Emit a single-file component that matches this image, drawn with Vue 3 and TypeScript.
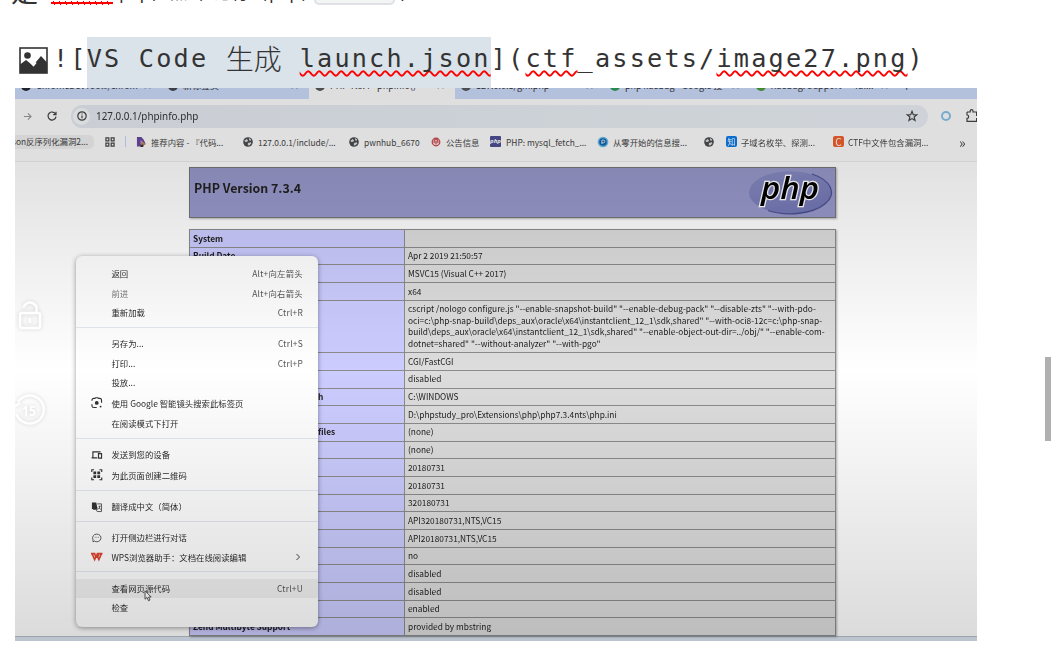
<template>
  <main class="editor">
    <div class="previous-line">
      <span class="lead">是</span>
      <span class="typo"></span>
      <span class="rest">php, 点击 运行 (php)</span>
      <span class="code-chip"></span>
      <span class="stop">,</span>
    </div>

    <div class="source-line">
      <svg class="picture-icon" viewBox="0 0 29 27">
        <rect x="1" y="1" width="27" height="25" fill="#fff" stroke="#333" stroke-width="1.6" />
        <circle cx="8.5" cy="8.5" r="3.3" fill="#333" />
        <path d="M1 17.5L7 13L14 18.5L22 9L28 15.5V26H1Z" fill="#333" />
        <path d="M9 12.5L14.5 18.5L17 15.5" fill="none" stroke="#fff" stroke-width="1.6" />
      </svg>
      <span class="mono">![</span>
      <span class="selected"><span class="mono">VS Code </span><span class="han">生成</span><span class="mono wavy gap">launch.json</span></span>
      <span class="mono">](</span><span class="mono wavy">ctf</span><span class="mono">_assets/</span><span class="mono wavy">image27.png</span><span class="mono">)</span>
    </div>

    <section class="shot">
      <div class="tabs">
        <div v-for="t in tabs" :key="t.title" class="tab" :class="{ active: t.active }" :style="{ width: t.width + 'px' }">
          <i class="favicon" :style="{ background: t.color }"></i>
          <span class="tab-title">{{ t.title }}</span>
          <span class="tab-close">×</span>
        </div>
        <span class="tab-plus">+</span>
      </div>

      <div class="toolbar soft">
        <svg class="forward" viewBox="0 0 10 10"><path d="M1 5H9M5.5 1.5L9 5L5.5 8.5" /></svg>
        <svg class="reload" viewBox="0 0 10 10"><path d="M8.6 3.2A4 4 0 1 0 9 5.6M9 .8V3.6H6.2" /></svg>
        <div class="address">
          <span class="info">
            <svg viewBox="0 0 10 10"><circle cx="5" cy="5" r="4.2" /><path d="M5 4.5V7.3M5 2.6V3.6" /></svg>
          </span>
          <span class="url">127.0.0.1/phpinfo.php</span>
          <svg class="star" viewBox="0 0 12 12"><path d="M6 1.3L7.3 4.6L10.8 4.8L8.1 7L9 10.5L6 8.6L3 10.5L3.9 7L1.2 4.8L4.7 4.6Z" /></svg>
        </div>
        <span class="ring"></span>
        <svg class="puzzle" viewBox="0 0 12 14"><path d="M1 3H4.2V2A1.4 1.4 0 0 1 7 2V3H10.6V6.5H12M1 3V6A1.7 1.7 0 0 1 1 9.4V12.4H10.6V9.5H12" /></svg>
      </div>

      <div class="bookmarks soft">
        <span class="pill">json反序列化漏洞2...</span>
        <svg class="apps" viewBox="0 0 11 11"><path d="M1 1H4.2V4.2H1ZM6.8 1H10V4.2H6.8ZM1 6.8H4.2V10H1ZM6.8 6.8H10V10H6.8Z" /></svg>
        <i class="divider"></i>
        <div v-for="(b, i) in bookmarks" :key="i" class="bookmark" :style="{ width: b.width + 'px' }">
          <svg v-if="b.icon === 'globe'" class="mark" viewBox="0 0 11 11">
            <circle cx="5.5" cy="5.5" r="5.3" fill="#4b4d50" />
            <path d="M1.5 4L4 2.2L5.5 3.5L4.8 5.3L2.5 5.6ZM6.5 1.2L9 2.8L8.2 4.4L6.8 3.5ZM5.5 6.5L8.5 5.8L9.2 7.2L6.5 9.7L5.2 8.5Z" fill="#dcdcdc" />
          </svg>
          <svg v-else-if="b.icon === 'parrot'" class="mark" viewBox="0 0 11 11">
            <path d="M1 0H6L8.5 3L10.5 7.5L7 10.5H1Z" fill="#6b4a9e" />
            <path d="M5 3L8 6L5 8Z" fill="#b39bd2" /><path d="M7 5L10.8 8L6 10.5L5.5 8Z" fill="#c98b4d" /><path d="M5 9L8 8L8 11H5Z" fill="#333" />
          </svg>
          <svg v-else-if="b.icon === 'red'" class="mark" viewBox="0 0 11 11">
            <circle cx="5.5" cy="5.5" r="4.2" fill="#f2d9d8" stroke="#c8434a" stroke-width="1.3" />
            <path d="M3.5 6.5V4.5A2 2 0 0 1 7.5 4.5V6.5M5.5 4V8" fill="none" stroke="#c8434a" stroke-width="1.2" />
          </svg>
          <svg v-else-if="b.icon === 'blue'" class="mark" viewBox="0 0 11 11">
            <circle cx="5.5" cy="5.5" r="5.9" fill="#67c0ea" /><circle cx="5.5" cy="5.5" r="4.2" fill="#1763ad" />
            <path d="M4.3 7.8V3.4H6A1.4 1.4 0 0 1 6 6.4H4.3" fill="none" stroke="#e5f1fa" stroke-width="1" />
          </svg>
          <i v-else class="badge" :class="b.icon">{{ b.glyph }}</i>
          <span>{{ b.title }}</span>
        </div>
        <span class="more">»</span>
      </div>

      <div class="page">
        <div class="phpinfo soft">
          <header class="banner">
            <h1>PHP Version 7.3.4</h1>
            <svg class="php-logo" viewBox="0 0 84 46">
              <defs>
                <linearGradient id="oval" x1=".2" y1="0" x2=".6" y2="1">
                  <stop offset="0" stop-color="#878bc2" />
                  <stop offset="1" stop-color="#7478b6" />
                </linearGradient>
              </defs>
              <ellipse cx="42" cy="24.5" rx="41" ry="21.3" fill="url(#oval)" />
              <path d="M64 6A41 21.3 0 0 1 20 42.5" fill="none" stroke="#4b5090" stroke-width="1.3" />
              <text x="42" y="31" text-anchor="middle" textLength="58" lengthAdjust="spacingAndGlyphs">php</text>
            </svg>
          </header>
          <table>
            <tbody>
              <tr v-for="(r, i) in rows" :key="i" :class="{ tall: r.lines.length > 1 }">
                <th><span :style="{ paddingLeft: (r.shift ?? 0) + 'px' }">{{ r.name }}</span></th>
                <td><div v-for="l in r.lines" :key="l">{{ l }}</div></td>
              </tr>
            </tbody>
          </table>
        </div>
      </div>
      <div class="taskbar"></div>

      <nav class="menu soft">
        <template v-for="(m, i) in menu" :key="i">
          <div v-if="m.sep" class="sep" :style="{ height: m.h + 'px' }"></div>
          <div v-else class="item" :class="{ hover: m.hover, muted: m.muted }" :style="{ height: m.h + 'px' }">
            <span class="item-icon">
              <svg v-if="m.icon === 'lens'" viewBox="0 0 12 12"><path d="M1 4V3A2 2 0 0 1 3 1.5H4L5 .8H7L8 1.5H9A2 2 0 0 1 11 3.5V6M1 7.5V9A2 2 0 0 0 3 11H6" /><circle cx="6" cy="6.2" r="2" class="solid" /><circle cx="10" cy="10" r="1" class="solid" /></svg>
              <svg v-else-if="m.icon === 'device'" viewBox="0 0 12 12"><path d="M2 8.5V3H10M.6 9.3H6.5M7.8 4.8H11V9.5H7.8Z" /></svg>
              <svg v-else-if="m.icon === 'qr'" viewBox="0 0 12 12"><path d="M.8 3.2V.8H3.2M8.8 .8H11.2V3.2M.8 8.8V11.2H3.2M8.8 11.2H11.2V8.8" /><path class="solid" d="M2.5 2.5H5.4V5.4H2.5ZM6.6 2.5H9.5V5.4H6.6ZM2.5 6.6H5.4V9.5H2.5ZM6.6 6.6H9.5V9.5H6.6Z" /></svg>
              <svg v-else-if="m.icon === 'translate'" viewBox="0 0 12 12"><path class="solid" d="M1 1.5H5.5L7 9H2.5L1 7.5Z" /><path class="fine" d="M6.5 3H11V11H6.5L5.5 9.5M8 5.5H10M9 5V6.5L7.8 8.5M8.5 7L10 9" /></svg>
              <svg v-else-if="m.icon === 'chat'" viewBox="0 0 12 12"><path class="fine" d="M2.2 10.4L3.4 9.4A4.4 4 0 1 0 2 7.8ZM4 5.5H4.7M5.8 5.5H6.5M7.6 5.5H8.3" /></svg>
              <svg v-else-if="m.icon === 'wps'" viewBox="0 0 12 12"><path class="wps" d="M0 2.8H4.6M6 2.8H12M1.2 3L3.8 9L6 4.4L8.2 9L10.8 3M3.8 3L4.9 5.8M8.3 3L7.2 5.8" /></svg>
            </span>
            <span class="label">{{ m.label }}</span>
            <span class="key">{{ m.key }}</span>
            <svg v-if="m.icon === 'wps'" class="chevron" viewBox="0 0 6 8"><path d="M1.5 1L4.5 4L1.5 7" /></svg>
          </div>
        </template>
      </nav>

      <svg class="pointer" viewBox="0 0 8 12"><path d="M1 .8V9.2L3 7.4L4.5 10.8L6 10L4.6 7H7.2Z" /></svg>
      <svg class="ghost lock" viewBox="0 0 28 34"><rect x="4" y="15" width="20" height="15" rx="2" /><path d="M7.5 9.5A6.6 6.6 0 1 1 20.5 13V15M14 20V25" /></svg>
      <svg class="ghost rewind" viewBox="0 0 34 36"><path d="M3 10A14 14 0 1 1 1.5 22" /><path d="M-1 15L5 11" /><text x="14" y="23.5" text-anchor="middle" textLength="14" lengthAdjust="spacingAndGlyphs">15</text></svg>
    </section>

    <div class="scroll-thumb"></div>
  </main>
</template>

<script setup lang="ts">
interface Tab { title: string; width: number; color: string; active?: boolean }
interface Bookmark { title: string; width: number; icon: string; glyph?: string }
interface Row { name: string; lines: string[]; shift?: number }
interface MenuEntry { h: number; sep?: boolean; label?: string; key?: string; icon?: string; hover?: boolean; muted?: boolean }

const tabs: Tab[] = [
  { title: "ChromeDevTools/chrom...", width: 147, color: "#24292f" },
  { title: "新标签页", width: 147, color: "#44474c" },
  { title: "PHP 7.3.4 - phpinfo()", width: 146, color: "#55585c", active: true },
  { title: "127.0.0.1/gm.php", width: 149, color: "#55585c" },
  { title: "php xdebug - Google 搜", width: 146, color: "#2e9c5b" },
  { title: "Xdebug: Support — Tai...", width: 149, color: "#4c9c3a" },
];

const bookmarks: Bookmark[] = [
  { title: "推荐内容 - 『代码...", width: 107, icon: "parrot" },
  { title: "127.0.0.1/include/...", width: 106, icon: "globe" },
  { title: "pwnhub_6670", width: 82, icon: "globe" },
  { title: "公告信息", width: 59, icon: "red" },
  { title: "PHP: mysql_fetch_...", width: 108, icon: "php", glyph: "php" },
  { title: "从零开始的信息搜...", width: 106, icon: "blue" },
  { title: "", width: 22, icon: "globe" },
  { title: "子域名枚举、探测...", width: 107, icon: "zhi", glyph: "知" },
  { title: "CTF中文件包含漏洞...", width: 110, icon: "csdn", glyph: "C" },
];

const rows: Row[] = [
  { name: "System", lines: [""] },
  { name: "Build Date", lines: ["Apr 2 2019 21:50:57"] },
  { name: "", lines: ["MSVC15 (Visual C++ 2017)"] },
  { name: "", lines: ["x64"] },
  {
    name: "",
    lines: [
      'cscript /nologo configure.js "--enable-snapshot-build" "--enable-debug-pack" "--disable-zts" "--with-pdo-',
      "oci=c:\\php-snap-build\\deps_aux\\oracle\\x64\\instantclient_12_1\\sdk,shared\" \"--with-oci8-12c=c:\\php-snap-",
      'build\\deps_aux\\oracle\\x64\\instantclient_12_1\\sdk,shared" "--enable-object-out-dir=../obj/" "--enable-com-',
      'dotnet=shared" "--without-analyzer" "--with-pgo"',
    ],
  },
  { name: "", lines: ["CGI/FastCGI"] },
  { name: "", lines: ["disabled"] },
  { name: "h", lines: ["C:\\WINDOWS"], shift: 125 },
  { name: "", lines: ["D:\\phpstudy_pro\\Extensions\\php\\php7.3.4nts\\php.ini"] },
  { name: "files", lines: ["(none)"], shift: 125 },
  { name: "", lines: ["(none)"] },
  { name: "", lines: ["20180731"] },
  { name: "", lines: ["20180731"] },
  { name: "", lines: ["320180731"] },
  { name: "", lines: ["API320180731,NTS,VC15"] },
  { name: "", lines: ["API20180731,NTS,VC15"] },
  { name: "", lines: ["no"] },
  { name: "", lines: ["disabled"] },
  { name: "", lines: ["disabled"] },
  { name: "", lines: ["enabled"] },
  { name: "Zend Multibyte Support", lines: ["provided by mbstring"] },
];

const menu: MenuEntry[] = [
  { label: "返回", key: "Alt+向左箭头", h: 19.5 },
  { label: "前进", key: "Alt+向右箭头", h: 19.5, muted: true },
  { label: "重新加载", key: "Ctrl+R", h: 19.5 },
  { sep: true, h: 11.5 },
  { label: "另存为...", key: "Ctrl+S", h: 19.5 },
  { label: "打印...", key: "Ctrl+P", h: 19.5 },
  { label: "投放...", h: 19.5 },
  { label: "使用 Google 智能镜头搜索此标签页", icon: "lens", h: 21.5 },
  { label: "在阅读模式下打开", h: 19.5 },
  { sep: true, h: 11 },
  { label: "发送到您的设备", icon: "device", h: 20.5 },
  { label: "为此页面创建二维码", icon: "qr", h: 20.5 },
  { sep: true, h: 11 },
  { label: "翻译成中文（简体）", icon: "translate", h: 20 },
  { sep: true, h: 11.5 },
  { label: "打开侧边栏进行对话", icon: "chat", h: 19.5 },
  { label: "WPS浏览器助手：文档在线阅读编辑", icon: "wps", h: 19.5 },
  { sep: true, h: 12 },
  { label: "查看网页源代码", key: "Ctrl+U", h: 19, hover: true },
  { label: "检查", h: 19.5 },
];
</script>

<style>
body {
  background: #fff;
  overflow: hidden;
}
</style>

<style scoped>
.editor {
  position: relative;
  width: 1051px;
  height: 664px;
  overflow: hidden;
  box-sizing: border-box;
  color: #333;
  font-family: "Noto Sans CJK SC", "Noto Sans", sans-serif;
}
svg {
  fill: none;
  flex: none;
  overflow: visible;
}
/* the embedded capture is slightly out of focus */
.soft { filter: blur(.3px); }

/* bottom edge of the line above */
.previous-line {
  display: flex;
  align-items: flex-end;
  height: 6px;
  padding-left: 11px;
  overflow: hidden;
  font: 27px/32px "DejaVu Sans Mono", "Noto Sans CJK SC", monospace;
}
.previous-line span {
  flex: none;
  height: 32px;
  margin-bottom: -3px;
}
.lead { width: 40px; }
.previous-line .typo {
  width: 62px;
  height: 4px;
  margin-bottom: 1px;
  background:
    radial-gradient(circle at 1.5px 4px, transparent 1.2px, red 1.5px 2.7px, transparent 3px) 0 0 / 6px 4px,
    radial-gradient(circle at 4.5px 0, transparent 1.2px, red 1.5px 2.7px, transparent 3px) 0 0 / 6px 4px;
}
.rest {
  width: 186px;
  margin-left: 6px;
  font-size: 17px;
  white-space: nowrap;
  overflow: hidden;
}
.previous-line .code-chip {
  width: 81px;
  height: 30px;
  margin: 0 0 1px 9px;
  box-sizing: border-box;
  background: #f3f4f4;
  border: 2px solid #dfe2e5;
  border-radius: 5px;
}
.stop {
  margin-left: 3px;
  font-size: 18px;
}

.source-line {
  display: flex;
  align-items: stretch;
  height: 51px;
  margin-top: 31px;
  padding-left: 19px;
  line-height: 43px;
  white-space: pre;
}
.picture-icon {
  width: 29px;
  height: 27px;
  margin: 10px 5px 0 0;
}
.mono {
  flex: none;
  font-family: "DejaVu Sans Mono", monospace;
  font-size: 25.2px;
  letter-spacing: 2.2px;
  white-space: pre;
}
.selected {
  display: flex;
  flex: none;
  width: 404px;
  margin-left: -1px;
  background: #dae2ea;
}
.han {
  flex: none;
  width: 58px;
  font-size: 28px;
  font-weight: 300;
}
.gap { margin-left: 16px; }
.wavy {
  text-decoration: underline wavy red 1.6px;
  text-decoration-skip-ink: none;
  text-underline-offset: 2.5px;
}

.shot {
  position: relative;
  display: flex;
  flex-direction: column;
  width: 962px;
  height: 553px;
  margin-left: 15px;
  overflow: hidden;
  background: #fff;
}
/* vertical shading that falls on the whole window */
.shot::after {
  content: "";
  position: absolute;
  inset: 0;
  pointer-events: none;
  background: linear-gradient(rgba(0, 0, 0, .115) 0, rgba(0, 0, 0, .115) 80px, rgba(0, 0, 0, 0) 282px, rgba(0, 0, 0, .14) 549px);
}

.tabs {
  display: flex;
  height: 11px;
  overflow: hidden;
  background: #cbdaf9;
}
.tab {
  display: flex;
  align-items: center;
  gap: 5px;
  height: 11px;
  padding: 0 10px 0 6px;
  box-sizing: border-box;
  font-size: 9px;
  color: #33363b;
}
.tab > * {
  margin-top: -16px;
  white-space: nowrap;
}
.tab.active {
  background: #fbfbfb;
}
.favicon {
  flex: none;
  width: 10px;
  height: 10px;
  border-radius: 50%;
}
.tab-title {
  flex: 1;
  min-width: 0;
  overflow: hidden;
}
.tab-plus {
  margin: -10px 0 0 4px;
  font-size: 13px;
  line-height: 16px;
}

.toolbar {
  display: flex;
  align-items: center;
  height: 34px;
  background: #fcfcfc;
}
.toolbar svg {
  stroke: #444;
  stroke-width: 1.2;
}
.toolbar .forward {
  width: 9px;
  height: 9px;
  margin-left: 8px;
  stroke: #999;
}
.reload {
  width: 10px;
  height: 10px;
  margin: 0 14px 0 15px;
}
.address {
  display: flex;
  flex: none;
  align-items: center;
  width: 857px;
  height: 23px;
  border-radius: 12px;
  background: linear-gradient(90deg, #e4e9f0, #eaeff5);
}
.info {
  display: grid;
  place-items: center;
  width: 17px;
  height: 17px;
  margin-left: 2px;
  border-radius: 50%;
  background: #f6f8fb;
}
.info svg {
  width: 10px;
  height: 10px;
}
.url {
  flex: 1;
  margin-left: 6px;
  color: #333;
  font: 9.85px "Noto Sans", sans-serif;
}
.star {
  width: 12px;
  height: 12px;
  margin-right: 10px;
}
.ring {
  flex: none;
  width: 6px;
  height: 6px;
  margin-left: 13px;
  border: 2.5px solid #86c2ea;
  border-radius: 50%;
}
.puzzle {
  width: 12px;
  height: 14px;
  margin-left: 15px;
}

.bookmarks {
  display: flex;
  align-items: center;
  height: 17px;
  padding-bottom: 11px;
  background: #fcfcfc;
  border-bottom: 1px solid #ececec;
  color: #444;
  font-size: 8.4px;
  white-space: nowrap;
}
.pill {
  flex: none;
  display: flex;
  justify-content: flex-end;
  box-sizing: border-box;
  width: 79px;
  height: 14px;
  padding-right: 6px;
  line-height: 13px;
  overflow: hidden;
  border-radius: 0 5px 5px 0;
  background: #f0f0f0;
}
.apps {
  width: 10px;
  height: 10px;
  margin-left: 11px;
  stroke: #444;
  stroke-width: 1.3;
}
.divider {
  width: 1px;
  height: 11px;
  margin: 0 10px;
  background: #c3d8f4;
}
.bookmark {
  display: flex;
  align-items: center;
  flex: none;
  gap: 5px;
}
.mark,
.badge {
  flex: none;
  width: 10px;
  height: 10px;
}
.badge {
  width: 11px;
  height: 11px;
  margin-right: -1px;
  border-radius: 2px;
  color: #fff;
  font: 8px/11px "Noto Sans CJK SC", sans-serif;
  text-align: center;
}
.badge.php {
  margin-right: 0;
  border-radius: 1px;
  background: #4d5195;
  font: italic bold 6px/10px "Noto Sans", sans-serif;
}
.badge.zhi { background: #0c7be8; }
.badge.csdn {
  background: #f0602f;
  font-size: 10px;
}
.more {
  margin-left: 16px;
  font-size: 14px;
}

.page {
  flex: 1;
  min-height: 0;
  padding: 5px 0 0 174px;
}
.phpinfo {
  width: 647px;
  color: #222;
}
.banner {
  display: flex;
  justify-content: space-between;
  box-sizing: border-box;
  height: 51px;
  padding: 0 3px 0 4px;
  margin-bottom: 11px;
  border: 1px solid #777;
  background: #9999cc;
  box-shadow: 1px 1px 2px rgba(0, 0, 0, .3);
}
.banner h1 {
  margin: 11px 0 0;
  font-size: 12.4px;
  line-height: 18px;
}
.php-logo {
  width: 84px;
  height: 46px;
}
.php-logo text {
  fill: #000;
  stroke: #fff;
  stroke-width: 2.4px;
  paint-order: stroke;
  font: italic 600 30px "Open Sans", sans-serif;
}
table {
  width: 647px;
  table-layout: fixed;
  border-collapse: collapse;
  font-size: 8.34px;
  line-height: 11.6px;
  box-shadow: 1px 1px 2px rgba(0, 0, 0, .3);
}
tr { height: 17.7px; }
tr.tall { height: 52.4px; }
th,
td {
  padding: 0 3px;
  border: 1px solid #8c8c8c;
  text-align: left;
  vertical-align: middle;
  white-space: nowrap;
}
th {
  width: 208px;
  background: #ccccff;
}
td { background: #dddddd; }
.taskbar {
  height: 4px;
  flex: none;
  border-top: 1px solid #b4bfc9;
  background: #dbe5f1;
}

.menu {
  position: absolute;
  left: 61px;
  top: 168px;
  width: 242px;
  height: 371px;
  padding-top: 8px;
  box-sizing: border-box;
  border-radius: 6px;
  background: #fff;
  box-shadow: 0 1px 5px rgba(0, 0, 0, .4);
  font-size: 8.38px;
  color: #2c2c2c;
}
.item {
  display: flex;
  align-items: center;
  padding: 0 15px;
  white-space: nowrap;
}
.item > .label,
.item > .key {
  margin-top: -1px;
}
.item.hover { background: #f2f2f2; }
.item.muted { color: #777; }
.item-icon {
  width: 20.5px;
  height: 12px;
}
.item-icon svg {
  display: block;
  width: 11.5px;
  height: 11.5px;
  stroke: #333;
  stroke-width: 1.2;
}
.item-icon .fine { stroke-width: .8; }
.item-icon .wps {
  stroke: #dd4630;
  stroke-width: 1.7;
}
.item-icon .solid {
  fill: #333;
  stroke: none;
}
.label { flex: 1; }
.key {
  color: #555;
  letter-spacing: .25px;
}
.chevron {
  width: 6px;
  height: 8px;
  margin-right: 2px;
  stroke: #444;
}
.sep {
  padding-top: 4px;
  box-sizing: border-box;
}
.sep::before {
  content: "";
  display: block;
  height: 1px;
  background: #e4e8f0;
}

.pointer {
  position: absolute;
  left: 129px;
  top: 502px;
  width: 8px;
  height: 12px;
  fill: #fff;
  stroke: #333;
  stroke-width: .8;
}
.ghost {
  position: absolute;
  z-index: 2;
  left: 1px;
  stroke: #fff;
  stroke-width: 2.4;
  filter: drop-shadow(0 0 2px rgba(0, 0, 0, .16));
}
.lock {
  top: 210px;
  width: 28px;
  height: 34px;
}
.rewind {
  left: 0;
  top: 304px;
  width: 34px;
  height: 36px;
}
.rewind text {
  fill: #fff;
  stroke: none;
  font: bold 14px "Noto Sans", sans-serif;
}

.scroll-thumb {
  position: absolute;
  right: 0;
  top: 357px;
  width: 6px;
  height: 84px;
  background: #b0b0b0;
}
</style>
